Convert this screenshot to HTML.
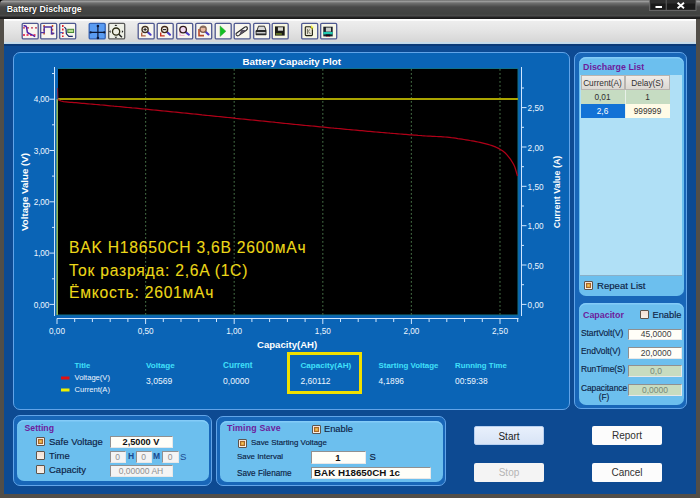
<!DOCTYPE html>
<html><head><meta charset="utf-8">
<style>
*{margin:0;padding:0;box-sizing:border-box}
html,body{width:700px;height:498px;overflow:hidden;background:#524e48}
body{position:relative;font-family:"Liberation Sans",sans-serif}
.a{position:absolute}
.t{position:absolute;white-space:nowrap;line-height:1}
#titlebar{left:0;top:0;width:700px;height:18.5px;background:linear-gradient(#6e6e6e 0,#9a9a9a 1.5px,#707070 3px,#484848 7px,#404240 14px,#4c4c4c 16px,#242424 17px,#1c1c1c 18.5px);border-radius:4px 1px 0 0}
#toolbar{left:4px;top:18.5px;width:692px;height:25.5px;background:linear-gradient(#fff 0,#fff 1.2px,#ededed 2.5px,#e4e4e4 12px,#d6d6d6 23px,#c6dcea 23.5px,#bcd4e6 25.5px)}
#body{left:3.5px;top:44px;width:692.5px;height:450px;background:linear-gradient(#0a3a78 0,#0a3a78 1.5px,#0d4a92 2.5px,#0d4a92)}
.outer{position:absolute;border:1px solid #62a4e8;border-radius:7px;background:#1866b8}
.inner{position:absolute;border-radius:7px;background:#6cbfee;box-shadow:inset 0 1.5px 0 #84ccf8}
.btn{position:absolute;width:70px;height:19px;font-size:10px;text-align:center;line-height:19px;border-radius:2px}
.cb{position:absolute;width:9px;height:9px;border:1px solid #5e544c;background:linear-gradient(#f4e0d4,#f8f0e8);border-radius:1px}
.cb.on::after{content:"";position:absolute;left:1px;top:1px;width:5px;height:5px;box-sizing:border-box;background:radial-gradient(#f0c860,#d89030);border:1px solid #a86828}
.inp{position:absolute;background:#fffef8;border-top:1px solid #909090;border-left:1px solid #909090;border-bottom:1px solid #e8e8e8;border-right:1px solid #e8e8e8}
.lbl{color:#0c1e44;font-size:9.5px;-webkit-text-stroke:0.15px #0c1e44}
.ptitle{color:#6c1c9c;font-weight:bold}
.wt{color:#eef6ff;font-size:8.2px}
.cy{color:#40e0fa;font-weight:bold;font-size:8px}
</style></head><body>
<div class="a" style="left:0;top:0;width:4px;height:4px;background:#000"></div>
<div id="titlebar" class="a"></div>
<div class="t" style="left:6.8px;top:4.6px;font-size:8.75px;font-weight:bold;color:#fff;text-shadow:0 0 1.5px #000">Battery Discharge</div>
<!-- window buttons -->
<svg class="a" style="left:640px;top:0" width="60" height="18" viewBox="640 0 60 18">
<rect x="649.5" y="-1" width="46.5" height="11.5" fill="#2e2e2e" stroke="#707070" stroke-width="0.8"/>
<line x1="666.2" y1="0" x2="666.2" y2="10.5" stroke="#6a6a6a" stroke-width="0.8"/>
<rect x="651" y="3.5" width="14.5" height="6" fill="#1a1a1a"/>
<rect x="667" y="3.5" width="28" height="6" fill="#1a1a1a"/>
<rect x="655.5" y="6" width="6.5" height="2" fill="#fff"/>
<path d="M677.6,2.8 L684,8.2 M684,2.8 L677.6,8.2" stroke="#fff" stroke-width="1.9"/>
</svg>
<div id="toolbar" class="a"></div>
<!--ICONS--><svg class="a" style="left:0;top:0" width="360" height="44" viewBox="0 0 360 44"><g transform="translate(22,23)"><rect x="0.2" y="0.3" width="16" height="15.6" rx="1.2" fill="#f8f6ee" stroke="#4e5890" stroke-width="1.3"/><path d="M1,4.8 h14" stroke="#c03050" stroke-width="1.3" stroke-dasharray="2 2"/><path d="M1,12 h14" stroke="#e01040" stroke-width="1.5" stroke-dasharray="2 1.5"/><path d="M1.5,2.6 L4,3.2 C5,4 5,8.5 5.4,9.4 C7,11 11,11.5 13,13.8" fill="none" stroke="#5020a8" stroke-width="1.5"/></g><g transform="translate(40.5,23)"><rect x="0.2" y="0.3" width="16" height="15.6" rx="1.2" fill="#f8f6ee" stroke="#4e5890" stroke-width="1.3"/><path d="M3.6,2 v11 M12,2 v11" stroke="#d05020" stroke-width="1.5" stroke-dasharray="2 1.8"/><path d="M0.3,9.6 H3.7 V4 H11 V10.8 L13.8,10.2" fill="none" stroke="#5030a0" stroke-width="1.4"/></g><g transform="translate(59.5,23)"><rect x="0.2" y="0.3" width="16" height="15.6" rx="1.2" fill="#f8f6ee" stroke="#4e5890" stroke-width="1.3"/><path d="M3.3,2 v12" stroke="#e02030" stroke-width="1.6" stroke-dasharray="2 1.5"/><path d="M0.3,9.6 H3.3" stroke="#4060c0" stroke-width="1.2"/><path d="M4.9,4 L6.5,6 L6.9,10.8 L9.3,13.3 H13.3" fill="none" stroke="#182868" stroke-width="1.2"/><rect x="8.3" y="6.3" width="5.8" height="3.2" fill="#b8e090" stroke="#488838" stroke-width="1"/></g><g transform="translate(89,23)"><rect x="0.2" y="0.3" width="16" height="15.6" rx="1.2" fill="#5a9cf2" stroke="#3462b4" stroke-width="1.3"/><path d="M8.9,3 V15 M1.4,9.4 H15.6" stroke="#0c1838" stroke-width="1.2"/><circle cx="8.9" cy="3" r="1.3" fill="#0c1838"/><circle cx="8.9" cy="15" r="1.3" fill="#0c1838"/><circle cx="1.6" cy="9.4" r="1.1" fill="#0c1838"/><circle cx="15.3" cy="9.4" r="1.1" fill="#0c1838"/></g><g transform="translate(108.5,23)"><rect x="0.2" y="0.3" width="16" height="15.6" rx="1.2" fill="#eef0e6" stroke="#5a5a5a" stroke-width="1.3"/><circle cx="7.6" cy="8.6" r="3.6" fill="#f0f0e4" stroke="#2a2a10" stroke-width="1.3"/><line x1="10.3" y1="11.3" x2="13.4" y2="14.3" stroke="#202020" stroke-width="1.5"/><path d="M7.4,1.4 l-1.4,1.6 h2.8z M7.4,15.3 l-1.4,-1.6 h2.8z M0.6,8.6 l1.5,-1.4 v2.8z M14.9,8.6 l-1.5,-1.4 v2.8z" fill="#1a1a1a"/></g><g transform="translate(138,23)"><rect x="0.2" y="0.3" width="16" height="15.6" rx="1.2" fill="#f8f6ee" stroke="#4e5890" stroke-width="1.3"/><path d="M3.7,9.4 V12.9 H7.7" fill="none" stroke="#b06040" stroke-width="1.4"/><line x1="9.3" y1="8.8" x2="12.6" y2="11.7" stroke="#4a3ac8" stroke-width="2.1" stroke-linecap="round"/><circle cx="7.1" cy="6.6" r="3.1" fill="#f4efe8" stroke="#403020" stroke-width="1.3"/><path d="M5.5,6.6 h3.2 M7.1,5 v3.2" stroke="#202020" stroke-width="1"/></g><g transform="translate(157,23)"><rect x="0.2" y="0.3" width="16" height="15.6" rx="1.2" fill="#f8f6ee" stroke="#4e5890" stroke-width="1.3"/><path d="M3.7,9.4 V12.9 H7.7" fill="none" stroke="#c83020" stroke-width="1.4"/><line x1="9.8" y1="8.8" x2="13" y2="11.7" stroke="#4a3ac8" stroke-width="2.1" stroke-linecap="round"/><circle cx="7.6" cy="6.6" r="3.1" fill="#f4efe8" stroke="#402818" stroke-width="1.3"/><path d="M5.9,6.6 h3.4" stroke="#202020" stroke-width="1.1"/></g><g transform="translate(176.5,23)"><rect x="0.2" y="0.3" width="16" height="15.6" rx="1.2" fill="#f8f6ee" stroke="#4e5890" stroke-width="1.3"/><path d="M3.5,8.5 V12.5 H8" fill="none" stroke="#f0b0d0" stroke-width="1.2"/><line x1="8.9" y1="8.9" x2="12.4" y2="11.7" stroke="#4a3ac8" stroke-width="2.1" stroke-linecap="round"/><circle cx="6.6" cy="6.6" r="3.3" fill="#f0d8f0" stroke="#301818" stroke-width="1.3"/></g><g transform="translate(195.5,23)"><rect x="0.2" y="0.3" width="16" height="15.6" rx="1.2" fill="#f8f6ee" stroke="#4e5890" stroke-width="1.3"/><path d="M3.5,6 V12.6 H8.5" fill="none" stroke="#b84828" stroke-width="1.6"/><line x1="9.8" y1="8.4" x2="13" y2="11.5" stroke="#4a3ac8" stroke-width="2.1" stroke-linecap="round"/><circle cx="7.6" cy="6.2" r="3.1" fill="#e8b8a0" stroke="#806050" stroke-width="1.3"/><path d="M5.5,4.2 h4" stroke="#8a7060" stroke-width="1.4"/></g><g transform="translate(215,23)"><rect x="0.2" y="0.3" width="16" height="15.6" rx="1.2" fill="#f8f6ee" stroke="#4e5890" stroke-width="1.3"/><path d="M5.1,2.9 L10.9,8.3 L5.1,13.4 z" fill="#12c020" stroke="#30a030" stroke-width="0.5"/></g><g transform="translate(234,23)"><rect x="0.2" y="0.3" width="16" height="15.6" rx="1.2" fill="#f8f6ee" stroke="#4e5890" stroke-width="1.3"/><path d="M2.4,10.2 L10.6,4.2 C11.8,3.4 13.2,3.9 13.4,5 C13.6,5.9 13.1,6.6 12.3,7.2 L5,12.4 C4,13 2.8,12.8 2.3,12 C1.9,11.3 2,10.6 2.4,10.2z" fill="#f4f4f0" stroke="#282828" stroke-width="1.1"/><path d="M7.3,6.8 L12.3,7.2 L5,12.4 z" fill="#585060"/></g><g transform="translate(253.5,23)"><rect x="0.2" y="0.3" width="16" height="15.6" rx="1.2" fill="#f8f6ee" stroke="#4e5890" stroke-width="1.3"/><path d="M3.5,7.5 L5,3.2 H11 L12.5,7.5" fill="#d8d8d8" stroke="#303030" stroke-width="1"/><path d="M2.1,8.2 C2.1,7.4 2.6,7 3.4,7 H11.8 C12.6,7 13,7.6 13,8.2 V11.6 C13,12.2 12.5,12.3 12,12.3 H3 C2.5,12.3 2.1,12 2.1,11.4z" fill="#282828"/><rect x="3" y="9.2" width="9" height="1.2" fill="#f0f0f0"/></g><g transform="translate(272,23)"><rect x="0.2" y="0.3" width="16" height="15.6" rx="1.2" fill="#f6f6e0" stroke="#4e5890" stroke-width="1.3"/><rect x="3" y="3.4" width="9.7" height="9.2" fill="#1c1c14"/><rect x="5.9" y="4.3" width="5.1" height="3.4" fill="#d8d8d0"/><rect x="3.8" y="10" width="6" height="2" fill="#5a6a20"/></g><g transform="translate(301.5,23)"><rect x="0.2" y="0.3" width="16" height="15.6" rx="1.2" fill="#f6f6e4" stroke="#4e5890" stroke-width="1.3"/><path d="M3.8,4.5 C3.8,4 4.2,3.7 4.8,3.7 H8.8 L10.9,5.8 V11.8 C10.9,12.3 10.5,12.6 10,12.6 H4.8 C4.2,12.6 3.8,12.3 3.8,11.8z" fill="#e4e0d0" stroke="#202010" stroke-width="1.1"/><path d="M6,6 V11 M6,8.8 L8.5,6.5 M6.8,8.5 L9,11" fill="none" stroke="#707060" stroke-width="0.9"/><path d="M9.5,1.5 L10.5,3.5 L12.5,4 L10.8,5 L11,7 L9.8,5.5" fill="#f0f020"/></g><g transform="translate(320.5,23)"><rect x="0.2" y="0.3" width="16" height="15.6" rx="1.2" fill="#f6f6e8" stroke="#4e5890" stroke-width="1.3"/><rect x="2.8" y="3.7" width="9.4" height="9.7" fill="#1c2028"/><rect x="5.4" y="4.6" width="5.1" height="4" fill="#c8ccc8"/><rect x="2.8" y="8.9" width="9.4" height="2.5" fill="#20c8b0"/><rect x="5.3" y="11.4" width="4.4" height="2" fill="#101018"/><rect x="6.3" y="13" width="2.5" height="0.6" fill="#e04050"/></g></svg><!--/ICONS-->
<div id="body" class="a"></div>

<!-- chart panel -->
<div class="outer" style="left:12.5px;top:52px;width:557.5px;height:358px;background:#0a64b6"></div>

<!-- discharge list -->
<div class="outer" style="left:574px;top:52px;width:113px;height:357px"></div>
<div class="inner" style="left:578.5px;top:56.5px;width:105.5px;height:239px"></div>
<!-- capacitor -->

<div class="inner" style="left:578.5px;top:303px;width:105.5px;height:101.5px"></div>
<!-- setting -->
<div class="outer" style="left:12.5px;top:415px;width:199px;height:71px"></div>
<div class="inner" style="left:17px;top:419.5px;width:192px;height:61.5px"></div>
<!-- timing save -->
<div class="outer" style="left:216px;top:416px;width:230px;height:70px"></div>
<div class="inner" style="left:220px;top:420.5px;width:223px;height:61px"></div>

<svg class="a" style="left:0;top:0" width="700" height="498" viewBox="0 0 700 498">
<rect x="58" y="68.5" width="460" height="246.5" fill="#000"/>
<line x1="57.5" y1="68.5" x2="518" y2="68.5" stroke="#10708a" stroke-width="1"/>
<line x1="518" y1="68.5" x2="518" y2="315" stroke="#10708a" stroke-width="1"/>
<line x1="57.5" y1="315" x2="518" y2="315" stroke="#10708a" stroke-width="1"/>
<line x1="145.6" y1="69" x2="145.6" y2="315" stroke="#3c603c" stroke-width="1.2" stroke-dasharray="1.8 2.2"/>
<line x1="234.2" y1="69" x2="234.2" y2="315" stroke="#3c603c" stroke-width="1.2" stroke-dasharray="1.8 2.2"/>
<line x1="322.8" y1="69" x2="322.8" y2="315" stroke="#3c603c" stroke-width="1.2" stroke-dasharray="1.8 2.2"/>
<line x1="411.4" y1="69" x2="411.4" y2="315" stroke="#3c603c" stroke-width="1.2" stroke-dasharray="1.8 2.2"/>
<line x1="500.0" y1="69" x2="500.0" y2="315" stroke="#3c603c" stroke-width="1.2" stroke-dasharray="1.8 2.2"/>
<line x1="54.5" y1="67" x2="54.5" y2="316" stroke="#cfe6ff" stroke-width="1"/>
<line x1="49.5" y1="304.4" x2="54.5" y2="304.4" stroke="#cfe6ff" stroke-width="1"/>
<line x1="52" y1="278.8" x2="54.5" y2="278.8" stroke="#cfe6ff" stroke-width="1"/>
<line x1="49.5" y1="253.1" x2="54.5" y2="253.1" stroke="#cfe6ff" stroke-width="1"/>
<line x1="52" y1="227.4" x2="54.5" y2="227.4" stroke="#cfe6ff" stroke-width="1"/>
<line x1="49.5" y1="201.8" x2="54.5" y2="201.8" stroke="#cfe6ff" stroke-width="1"/>
<line x1="52" y1="176.1" x2="54.5" y2="176.1" stroke="#cfe6ff" stroke-width="1"/>
<line x1="49.5" y1="150.5" x2="54.5" y2="150.5" stroke="#cfe6ff" stroke-width="1"/>
<line x1="52" y1="124.8" x2="54.5" y2="124.8" stroke="#cfe6ff" stroke-width="1"/>
<line x1="49.5" y1="99.2" x2="54.5" y2="99.2" stroke="#cfe6ff" stroke-width="1"/>
<line x1="52" y1="73.5" x2="54.5" y2="73.5" stroke="#cfe6ff" stroke-width="1"/>
<line x1="521.5" y1="67" x2="521.5" y2="316" stroke="#cfe6ff" stroke-width="1"/>
<line x1="521.5" y1="304.4" x2="526.5" y2="304.4" stroke="#cfe6ff" stroke-width="1"/>
<line x1="521.5" y1="284.7" x2="524" y2="284.7" stroke="#cfe6ff" stroke-width="1"/>
<line x1="521.5" y1="265.0" x2="526.5" y2="265.0" stroke="#cfe6ff" stroke-width="1"/>
<line x1="521.5" y1="245.4" x2="524" y2="245.4" stroke="#cfe6ff" stroke-width="1"/>
<line x1="521.5" y1="225.7" x2="526.5" y2="225.7" stroke="#cfe6ff" stroke-width="1"/>
<line x1="521.5" y1="206.0" x2="524" y2="206.0" stroke="#cfe6ff" stroke-width="1"/>
<line x1="521.5" y1="186.3" x2="526.5" y2="186.3" stroke="#cfe6ff" stroke-width="1"/>
<line x1="521.5" y1="166.7" x2="524" y2="166.7" stroke="#cfe6ff" stroke-width="1"/>
<line x1="521.5" y1="147.0" x2="526.5" y2="147.0" stroke="#cfe6ff" stroke-width="1"/>
<line x1="521.5" y1="127.3" x2="524" y2="127.3" stroke="#cfe6ff" stroke-width="1"/>
<line x1="521.5" y1="107.6" x2="526.5" y2="107.6" stroke="#cfe6ff" stroke-width="1"/>
<line x1="521.5" y1="88.0" x2="524" y2="88.0" stroke="#cfe6ff" stroke-width="1"/>
<line x1="57" y1="318.5" x2="518.5" y2="318.5" stroke="#cfe6ff" stroke-width="1"/>
<line x1="57.0" y1="318.5" x2="57.0" y2="324" stroke="#cfe6ff" stroke-width="1"/>
<line x1="74.7" y1="318.5" x2="74.7" y2="322" stroke="#cfe6ff" stroke-width="1"/>
<line x1="92.4" y1="318.5" x2="92.4" y2="322" stroke="#cfe6ff" stroke-width="1"/>
<line x1="110.2" y1="318.5" x2="110.2" y2="322" stroke="#cfe6ff" stroke-width="1"/>
<line x1="127.9" y1="318.5" x2="127.9" y2="322" stroke="#cfe6ff" stroke-width="1"/>
<line x1="145.6" y1="318.5" x2="145.6" y2="324" stroke="#cfe6ff" stroke-width="1"/>
<line x1="163.3" y1="318.5" x2="163.3" y2="322" stroke="#cfe6ff" stroke-width="1"/>
<line x1="181.0" y1="318.5" x2="181.0" y2="322" stroke="#cfe6ff" stroke-width="1"/>
<line x1="198.8" y1="318.5" x2="198.8" y2="322" stroke="#cfe6ff" stroke-width="1"/>
<line x1="216.5" y1="318.5" x2="216.5" y2="322" stroke="#cfe6ff" stroke-width="1"/>
<line x1="234.2" y1="318.5" x2="234.2" y2="324" stroke="#cfe6ff" stroke-width="1"/>
<line x1="251.9" y1="318.5" x2="251.9" y2="322" stroke="#cfe6ff" stroke-width="1"/>
<line x1="269.6" y1="318.5" x2="269.6" y2="322" stroke="#cfe6ff" stroke-width="1"/>
<line x1="287.4" y1="318.5" x2="287.4" y2="322" stroke="#cfe6ff" stroke-width="1"/>
<line x1="305.1" y1="318.5" x2="305.1" y2="322" stroke="#cfe6ff" stroke-width="1"/>
<line x1="322.8" y1="318.5" x2="322.8" y2="324" stroke="#cfe6ff" stroke-width="1"/>
<line x1="340.5" y1="318.5" x2="340.5" y2="322" stroke="#cfe6ff" stroke-width="1"/>
<line x1="358.2" y1="318.5" x2="358.2" y2="322" stroke="#cfe6ff" stroke-width="1"/>
<line x1="376.0" y1="318.5" x2="376.0" y2="322" stroke="#cfe6ff" stroke-width="1"/>
<line x1="393.7" y1="318.5" x2="393.7" y2="322" stroke="#cfe6ff" stroke-width="1"/>
<line x1="411.4" y1="318.5" x2="411.4" y2="324" stroke="#cfe6ff" stroke-width="1"/>
<line x1="429.1" y1="318.5" x2="429.1" y2="322" stroke="#cfe6ff" stroke-width="1"/>
<line x1="446.8" y1="318.5" x2="446.8" y2="322" stroke="#cfe6ff" stroke-width="1"/>
<line x1="464.6" y1="318.5" x2="464.6" y2="322" stroke="#cfe6ff" stroke-width="1"/>
<line x1="482.3" y1="318.5" x2="482.3" y2="322" stroke="#cfe6ff" stroke-width="1"/>
<line x1="500.0" y1="318.5" x2="500.0" y2="324" stroke="#cfe6ff" stroke-width="1"/>
<line x1="517.7" y1="318.5" x2="517.7" y2="322" stroke="#cfe6ff" stroke-width="1"/>
<path d="M57.2,315 L57.2,99" fill="none" stroke="#90b858" stroke-width="1.6"/><path d="M58,99 L518,99" fill="none" stroke="#aaa400" stroke-width="2"/>
<path d="M57.6,88 L57.9,99.5" fill="none" stroke="#902040" stroke-width="1"/><path d="M58.2,99.6 L59.6,100.4 L61.0,101.0 L63.5,101.6 L66.0,101.9 L68.0,102.1 L70.0,102.3 L72.0,102.4 L74.0,102.6 L76.0,102.7 L78.0,102.9 L80.0,103.1 L82.0,103.3 L84.0,103.4 L86.0,103.6 L88.0,103.8 L90.0,104.0 L92.0,104.1 L94.0,104.3 L96.0,104.5 L98.0,104.7 L100.0,104.9 L102.0,105.0 L104.0,105.2 L106.0,105.4 L108.0,105.6 L110.0,105.8 L112.0,106.0 L114.0,106.2 L116.0,106.3 L118.0,106.5 L120.0,106.7 L122.0,106.9 L124.0,107.1 L126.0,107.3 L128.0,107.5 L130.0,107.7 L132.0,107.9 L134.0,108.0 L136.0,108.2 L138.0,108.4 L140.0,108.6 L142.0,108.8 L144.0,109.0 L146.0,109.2 L148.0,109.4 L150.0,109.6 L152.0,109.8 L154.0,110.0 L156.0,110.2 L158.0,110.4 L160.0,110.6 L162.0,110.8 L164.0,111.0 L166.0,111.2 L168.0,111.4 L170.0,111.6 L172.0,111.8 L174.0,112.0 L176.0,112.2 L178.0,112.4 L180.0,112.6 L182.0,112.8 L184.0,113.0 L186.0,113.2 L188.0,113.4 L190.0,113.6 L192.0,113.8 L194.0,114.0 L196.0,114.2 L198.0,114.4 L200.0,114.6 L202.0,114.9 L204.0,115.1 L206.0,115.3 L208.0,115.5 L210.0,115.7 L212.0,115.9 L214.0,116.1 L216.0,116.3 L218.0,116.5 L220.0,116.7 L222.0,116.9 L224.0,117.1 L226.0,117.3 L228.0,117.5 L230.0,117.7 L232.0,117.9 L234.0,118.1 L236.0,118.4 L238.0,118.6 L240.0,118.8 L242.0,119.0 L244.0,119.2 L246.0,119.4 L248.0,119.6 L250.0,119.8 L252.0,120.0 L254.0,120.2 L256.0,120.4 L258.0,120.6 L260.0,120.8 L262.0,121.0 L264.0,121.2 L266.0,121.4 L268.0,121.6 L270.0,121.8 L272.0,122.0 L274.0,122.2 L276.0,122.5 L278.0,122.7 L280.0,122.9 L282.0,123.1 L284.0,123.3 L286.0,123.5 L288.0,123.7 L290.0,123.9 L292.0,124.1 L294.0,124.3 L296.0,124.5 L298.0,124.7 L300.0,124.9 L302.0,125.1 L304.0,125.3 L306.0,125.5 L308.0,125.6 L310.0,125.8 L312.0,126.0 L314.0,126.2 L316.0,126.4 L318.0,126.6 L320.0,126.8 L322.0,127.0 L324.0,127.2 L326.0,127.4 L328.0,127.6 L330.0,127.8 L332.0,128.0 L334.0,128.2 L336.0,128.3 L338.0,128.5 L340.0,128.7 L342.0,128.9 L344.0,129.1 L346.0,129.3 L348.0,129.5 L350.0,129.6 L352.0,129.8 L354.0,130.0 L356.0,130.2 L358.0,130.4 L360.0,130.6 L362.0,130.7 L364.0,130.9 L366.0,131.1 L368.0,131.3 L370.0,131.4 L372.0,131.6 L374.0,131.8 L376.0,132.0 L378.0,132.1 L380.0,132.3 L382.0,132.5 L384.0,132.6 L386.0,132.8 L388.0,133.0 L390.0,133.2 L392.0,133.3 L394.0,133.5 L396.0,133.6 L398.0,133.8 L400.0,134.0 L402.0,134.1 L404.0,134.3 L406.0,134.4 L408.0,134.6 L410.0,134.8 L412.0,134.9 L414.0,135.1 L416.0,135.2 L418.0,135.4 L420.0,135.5 L422.0,135.7 L424.0,135.8 L426.0,136.0 L428.1,136.1 L430.2,136.2 L432.3,136.3 L434.4,136.4 L436.6,136.5 L438.7,136.6 L440.8,136.7 L442.9,136.8 L445.0,137.0 L447.1,137.2 L449.2,137.4 L451.4,137.7 L453.5,137.9 L455.6,138.2 L457.8,138.6 L459.9,138.9 L462.0,139.2 L464.0,139.5 L466.0,139.8 L468.0,140.1 L470.0,140.5 L472.0,140.8 L474.0,141.2 L476.0,141.6 L478.0,142.0 L480.0,142.4 L482.0,142.9 L484.0,143.4 L486.0,143.9 L488.0,144.4 L490.0,145.0 L492.0,145.7 L494.0,146.4 L496.0,147.2 L498.0,148.1 L500.0,149.2 L502.5,150.8 L505.0,152.8 L507.0,154.9 L509.0,157.3 L510.8,159.7 L512.5,162.5 L513.8,164.8 L515.0,167.5 L516.2,171.5 L517.5,176.0" fill="none" stroke="#b00018" stroke-width="1.25" stroke-linejoin="round"/>
<rect x="61" y="376.5" width="8.5" height="3" fill="#e01010"/>
<rect x="61" y="388.5" width="8.5" height="3" fill="#f0f000"/>
<rect x="288.5" y="353.5" width="72" height="39" fill="none" stroke="#f0e000" stroke-width="3"/>
</svg>

<!-- chart texts -->
<div class="t" style="left:242.5px;top:57px;font-size:9.8px;font-weight:bold;color:#fff">Battery Capacity Plot</div>
<div class="t" style="left:25px;top:192px;font-size:9.7px;font-weight:bold;color:#fff;transform:translate(-50%,-50%) rotate(-90deg)">Voltage Value (V)</div>
<div class="t" style="left:557px;top:191.5px;font-size:8.9px;font-weight:bold;color:#fff;transform:translate(-50%,-50%) rotate(-90deg)">Current Value (A)</div>
<div class="t wt" style="right:651px;top:301.5px;letter-spacing:-0.2px">0,00</div>
<div class="t wt" style="right:651px;top:250.2px;letter-spacing:-0.2px">1,00</div>
<div class="t wt" style="right:651px;top:198.9px;letter-spacing:-0.2px">2,00</div>
<div class="t wt" style="right:651px;top:147.6px;letter-spacing:-0.2px">3,00</div>
<div class="t wt" style="right:651px;top:96.3px;letter-spacing:-0.2px">4,00</div>
<div class="t wt" style="left:527.6px;top:302.1px">0,00</div>
<div class="t wt" style="left:527.6px;top:262.7px">0,50</div>
<div class="t wt" style="left:527.6px;top:223.4px">1,00</div>
<div class="t wt" style="left:527.6px;top:184.0px">1,50</div>
<div class="t wt" style="left:527.6px;top:144.7px">2,00</div>
<div class="t wt" style="left:527.6px;top:105.3px">2,50</div>
<div class="t wt" style="left:57.0px;top:328px;transform:translateX(-50%)">0,00</div>
<div class="t wt" style="left:145.6px;top:328px;transform:translateX(-50%)">0,50</div>
<div class="t wt" style="left:234.2px;top:328px;transform:translateX(-50%)">1,00</div>
<div class="t wt" style="left:322.8px;top:328px;transform:translateX(-50%)">1,50</div>
<div class="t wt" style="left:411.4px;top:328px;transform:translateX(-50%)">2,00</div>
<div class="t wt" style="left:500.0px;top:328px;transform:translateX(-50%)">2,50</div>
<div class="t" style="left:257px;top:340px;font-size:9.6px;font-weight:bold;color:#fff">Capacity(AH)</div>
<div class="t" style="left:69px;top:237.3px;font-size:15.7px;letter-spacing:0.75px;color:#ecd818;line-height:22.5px;-webkit-text-stroke:0.1px #ecd818">BAK H18650CH 3,6B 2600мАч<br>Ток разряда: 2,6A (1C)<br>Ёмкость: 2601мАч</div>
<div class="t cy" style="left:74.5px;top:361.5px;font-size:7.7px">Title</div>
<div class="t wt" style="left:74.5px;top:373.5px;font-size:7.6px">Voltage(V)</div>
<div class="t wt" style="left:74.5px;top:386px;font-size:7.6px">Current(A)</div>
<div class="t cy" style="left:146px;top:361.5px;font-size:8.1px">Voltage</div>
<div class="t wt" style="left:146px;top:377px;font-size:8.6px">3,0569</div>
<div class="t cy" style="left:223px;top:361.5px;font-size:8.2px">Current</div>
<div class="t wt" style="left:223px;top:377px;font-size:8.6px">0,0000</div>
<div class="t cy" style="left:300.5px;top:361.5px;font-size:8.1px">Capacity(AH)</div>
<div class="t wt" style="left:300.5px;top:377px;font-size:8.5px">2,60112</div>
<div class="t cy" style="left:378.5px;top:361.5px;font-size:7.9px">Starting Voltage</div>
<div class="t wt" style="left:378.5px;top:377px;font-size:8.3px">4,1896</div>
<div class="t cy" style="left:455px;top:361.5px;font-size:7.8px">Running Time</div>
<div class="t wt" style="left:455px;top:377px;font-size:8.4px">00:59:38</div>

<!-- discharge list content -->
<div class="t ptitle" style="left:583px;top:62.5px;font-size:8.9px">Discharge List</div>
<div class="a" style="left:580px;top:74.5px;width:102px;height:201px;background:#b0e0f6;border-bottom:1px solid #8ab0c8"></div>
<div class="a" style="left:580.5px;top:74.5px;width:44px;height:15px;background:linear-gradient(#f0ece8,#dcd8d2);border:1px solid #b8b4b0"></div>
<div class="a" style="left:624.5px;top:74.5px;width:45px;height:15px;background:linear-gradient(#f0ece8,#dcd8d2);border:1px solid #b8b4b0"></div>
<div class="a" style="left:580.5px;top:89.5px;width:89px;height:14.5px;background:#c6dcc2"></div>
<div class="a" style="left:624.5px;top:89.5px;width:1px;height:28px;background:#e8f0e8"></div>
<div class="a" style="left:580.5px;top:104px;width:44px;height:14px;background:#1272d6"></div>
<div class="a" style="left:625.5px;top:104px;width:44px;height:14px;background:#fffbe6"></div>
<div class="t" style="left:602.5px;top:79px;font-size:8.3px;color:#303030;transform:translateX(-50%)">Current(A)</div>
<div class="t" style="left:647.5px;top:79px;font-size:8.3px;color:#303030;transform:translateX(-50%)">Delay(S)</div>
<div class="t" style="left:602.5px;top:92.5px;font-size:8.3px;color:#303030;transform:translateX(-50%)">0,01</div>
<div class="t" style="left:647.5px;top:92.5px;font-size:8.3px;color:#303030;transform:translateX(-50%)">1</div>
<div class="t" style="left:602.5px;top:106.5px;font-size:8.3px;color:#fff;transform:translateX(-50%)">2,6</div>
<div class="t" style="left:647.5px;top:106.5px;font-size:8.3px;color:#303030;transform:translateX(-50%)">999999</div>
<div class="cb on" style="left:584px;top:280.5px"></div>
<div class="t lbl" style="left:597px;top:280.5px;font-size:9.6px">Repeat List</div>

<!-- capacitor -->
<div class="t ptitle" style="left:583px;top:310.5px;font-size:8.9px">Capacitor</div>
<div class="cb" style="left:639.5px;top:310px"></div>
<div class="t lbl" style="left:652.5px;top:310.5px;font-size:9.3px">Enable</div>
<div class="t lbl" style="left:581px;top:328.8px;font-size:8.4px;letter-spacing:-0.05px">StartVolt(V)</div>
<div class="t lbl" style="left:581px;top:346.8px;font-size:8.4px;letter-spacing:-0.05px">EndVolt(V)</div>
<div class="t lbl" style="left:581px;top:364.8px;font-size:8.4px;letter-spacing:-0.05px">RunTime(S)</div>
<div class="t lbl" style="left:581px;top:383.8px;font-size:8.4px;letter-spacing:-0.05px">Capacitance</div>
<div class="t lbl" style="left:604px;top:392.8px;font-size:8.4px;transform:translateX(-50%)">(F)</div>
<div class="inp" style="left:628px;top:328.5px;width:54px;height:11.5px"></div>
<div class="inp" style="left:628px;top:347px;width:54px;height:11.5px"></div>
<div class="inp" style="left:628px;top:365px;width:54px;height:11.5px;background:#c8dcc0"></div>
<div class="inp" style="left:628px;top:384px;width:54px;height:11.5px;background:#c8dcc0"></div>
<div class="t" style="right:28.5px;top:330px;font-size:8.5px;color:#404040">45,0000</div>
<div class="t" style="right:28.5px;top:348.5px;font-size:8.5px;color:#404040">20,0000</div>
<div class="t" style="left:656px;top:366.5px;font-size:8.5px;color:#788878;transform:translateX(-50%)">0,0</div>
<div class="t" style="left:655px;top:385.5px;font-size:8.5px;color:#788878;transform:translateX(-50%)">0,0000</div>

<!-- setting -->
<div class="t ptitle" style="left:24.5px;top:424px;font-size:8.7px">Setting</div>
<div class="cb on" style="left:36px;top:436.6px"></div>
<div class="cb" style="left:36px;top:450.8px"></div>
<div class="cb" style="left:36px;top:465px"></div>
<div class="t lbl" style="left:49px;top:436.5px;font-size:9.5px">Safe Voltage</div>
<div class="t lbl" style="left:49px;top:450.5px;font-size:9.5px">Time</div>
<div class="t lbl" style="left:49px;top:465.3px;font-size:9.5px">Capacity</div>
<div class="inp" style="left:109.5px;top:436px;width:63px;height:12px"></div>
<div class="t" style="left:141px;top:437.5px;font-size:9.2px;font-weight:bold;color:#101010;transform:translateX(-50%)">2,5000 V</div>
<div class="inp" style="left:109.5px;top:450.5px;width:16px;height:12.5px;background:#f4f4f4"></div>
<div class="inp" style="left:135.5px;top:450.5px;width:16.5px;height:12.5px;background:#f4f4f4"></div>
<div class="inp" style="left:162px;top:450.5px;width:16.5px;height:12.5px;background:#f4f4f4"></div>
<div class="t" style="left:117.5px;top:452.5px;font-size:8.5px;color:#909090;transform:translateX(-50%)">0</div>
<div class="t" style="left:143.5px;top:452.5px;font-size:8.5px;color:#909090;transform:translateX(-50%)">0</div>
<div class="t" style="left:170px;top:452.5px;font-size:8.5px;color:#909090;transform:translateX(-50%)">0</div>
<div class="t" style="left:128px;top:452px;font-size:8.5px;font-weight:bold;color:#1a4a90">H</div>
<div class="t" style="left:153px;top:452px;font-size:8.5px;font-weight:bold;color:#1a4a90">M</div>
<div class="t" style="left:180px;top:451.5px;font-size:9.5px;color:#1a4a90">S</div>
<div class="inp" style="left:109.5px;top:465px;width:63px;height:12px;background:#f4f4f4"></div>
<div class="t" style="left:141px;top:467px;font-size:8.5px;color:#909090;transform:translateX(-50%)">0,00000 AH</div>

<!-- timing save -->
<div class="t ptitle" style="left:227px;top:424px;font-size:8.8px;letter-spacing:0.2px">Timing Save</div>
<div class="cb on" style="left:311.5px;top:425px"></div>
<div class="t lbl" style="left:324px;top:425px;font-size:9.3px">Enable</div>
<div class="cb on" style="left:238px;top:439px"></div>
<div class="t lbl" style="left:251px;top:439px;font-size:7.9px">Save Starting Voltage</div>
<div class="t lbl" style="left:237px;top:452.5px;font-size:7.9px">Save Interval</div>
<div class="t lbl" style="left:237px;top:469.5px;font-size:8.2px">Save Filename</div>
<div class="inp" style="left:310.5px;top:450.5px;width:55.5px;height:13.5px"></div>
<div class="t" style="left:338px;top:452.5px;font-size:9.5px;font-weight:bold;color:#101010;transform:translateX(-50%)">1</div>
<div class="t lbl" style="left:369.5px;top:452px;font-size:9.5px">S</div>
<div class="inp" style="left:310.5px;top:466.5px;width:120.5px;height:12.5px;background:#fffef8"></div>
<div class="t" style="left:314px;top:468px;font-size:9.8px;font-weight:bold;color:#101010">BAK H18650CH 1c</div>

<!-- buttons -->
<div class="btn" style="left:474px;top:425.5px;background:linear-gradient(#e8f0fc,#d8e4f6);color:#202020;border:1px solid #b8d0f0">Start</div>
<div class="btn" style="left:592px;top:426px;background:#fcfcfc;color:#303030">Report</div>
<div class="btn" style="left:474px;top:463px;background:#f4f4f4;color:#b4b4b4">Stop</div>
<div class="btn" style="left:592px;top:463px;background:#fcfcfc;color:#303030">Cancel</div>

</body></html>
